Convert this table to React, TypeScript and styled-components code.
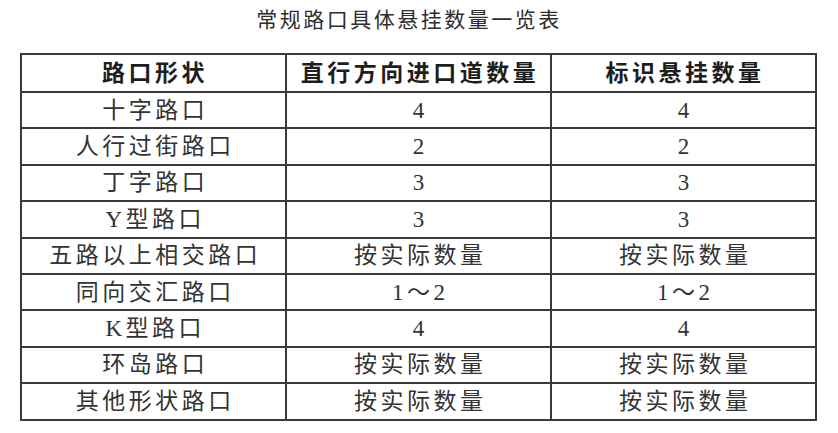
import styled, { createGlobalStyle } from "styled-components";

const rows: [string, string, string][] = [
    ['十字路口', '4', '4'],
    ['人行过街路口', '2', '2'],
    ['丁字路口', '3', '3'],
    ['Y型路口', '3', '3'],
    ['五路以上相交路口', '按实际数量', '按实际数量'],
    ['同向交汇路口', '1～2', '1～2'],
    ['K型路口', '4', '4'],
    ['环岛路口', '按实际数量', '按实际数量'],
    ['其他形状路口', '按实际数量', '按实际数量'],
]

export default function App() {
    return (
        <>
            <GlobalStyle />
            <Page>
                <Title>常规路口具体悬挂数量一览表</Title>
                <Table>
                    <thead>
                        <HeadRow>
                            <HeadCell>路口形状</HeadCell>
                            <HeadCell>直行方向进口道数量</HeadCell>
                            <HeadCell>标识悬挂数量</HeadCell>
                        </HeadRow>
                    </thead>
                    <tbody>
                        {rows.map(([shape, lanes, signs]) => (
                            <Row key={shape}>
                                <Cell>{shape}</Cell>
                                <Cell>{lanes}</Cell>
                                <Cell>{signs}</Cell>
                            </Row>
                        ))}
                    </tbody>
                </Table>
            </Page>
        </>
    )
}

const GlobalStyle = createGlobalStyle`
    html, body {
        margin: 0;
        padding: 0;
        background: #fff;
    }
`;

const Page = styled.div`
    width: 838px;
    height: 433px;
    padding: 6px 0 0 20px;
    box-sizing: border-box;
`;

const Title = styled.div`
    width: 796px;
    padding-right: 18px;
    box-sizing: border-box;
    text-align: center;
    font-family: "Noto Sans CJK SC", "Noto Sans", sans-serif;
    font-size: 21px;
    letter-spacing: 2.5px;
    line-height: 24px;
    color: #2e2e2e;
    margin-bottom: 23px;
`;

const Table = styled.table`
    width: 797px;
    border-collapse: collapse;
    table-layout: fixed;
    border: 2px solid #3a3a3a;
    font-family: "Liberation Serif", "Noto Sans CJK SC", serif;
    color: #333;
`;

const HeadRow = styled.tr`
    height: 38px;
`;

const Row = styled.tr`
    height: 36.4px;
`;

const HeadCell = styled.th`
    border: 2px solid #3a3a3a;
    padding: 0 0 0 3px;
    text-align: center;
    font-size: 23px;
    font-weight: 700;
    letter-spacing: 3.5px;
    line-height: 1;
    color: #1e1e1e;
`;

const Cell = styled.td`
    border: 2px solid #3a3a3a;
    padding: 0 0 0 3.5px;
    text-align: center;
    font-size: 23px;
    font-weight: 400;
    letter-spacing: 3.5px;
    line-height: 1;
`;
